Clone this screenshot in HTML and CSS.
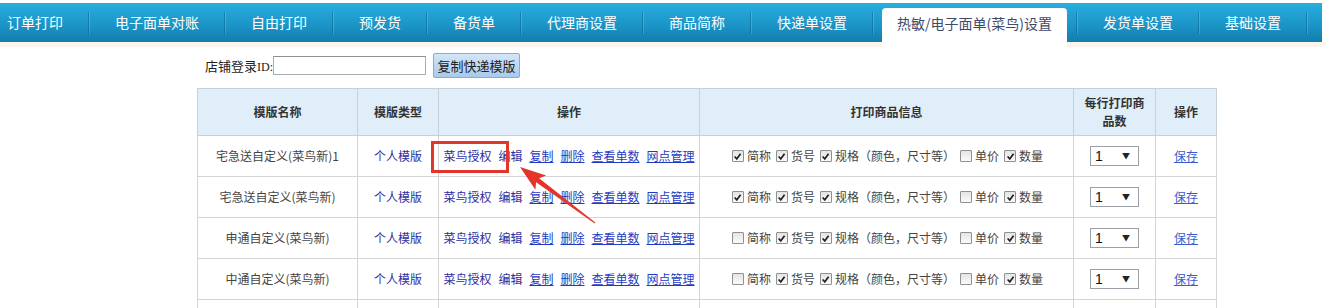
FILE: index.html
```html
<!DOCTYPE html>
<html lang="zh-CN">

<head>
    <meta charset="UTF-8">
    <title>热敏/电子面单(菜鸟)设置</title>
    <link rel="stylesheet" href="styles.css">
</head>

<body>
    <div class="nav">
        <ul class="tabs">
            <li><a href="#">订单打印</a></li>
            <li><a href="#">电子面单对账</a></li>
            <li><a href="#">自由打印</a></li>
            <li><a href="#">预发货</a></li>
            <li><a href="#">备货单</a></li>
            <li><a href="#">代理商设置</a></li>
            <li><a href="#">商品简称</a></li>
            <li><a href="#">快递单设置</a></li>
            <li class="active"><a href="#">热敏/电子面单(菜鸟)设置</a></li>
            <li><a href="#">发货单设置</a></li>
            <li><a href="#">基础设置</a></li>
        </ul>
    </div>

    <div class="main">
        <div class="toolbar">
            <label for="shopId">店铺登录<span class="id">ID:</span></label>
            <input type="text" id="shopId">
            <button type="button" class="copy-btn">复制快递模版</button>
        </div>

        <table class="tpl-table">
            <colgroup>
                <col style="width:160px">
                <col style="width:81px">
                <col style="width:261px">
                <col style="width:374px">
                <col style="width:82px">
                <col style="width:61px">
            </colgroup>
            <thead>
                <tr>
                    <th>模版名称</th>
                    <th>模版类型</th>
                    <th>操作</th>
                    <th>打印商品信息</th>
                    <th>每行打印商品数</th>
                    <th>操作</th>
                </tr>
            </thead>
            <tbody>
                <tr>
                    <td>宅急送自定义(菜鸟新)1</td>
                    <td><a href="#" class="type">个人模版</a></td>
                    <td>
                        <div class="ops">
                            <a href="#">菜鸟授权</a><a href="#">编辑</a><a href="#" class="u">复制</a><a href="#" class="u">删除</a><a href="#" class="u">查看单数</a><a href="#" class="u">网点管理</a>
                        </div>
                    </td>
                    <td>
                        <div class="chk">
                            <label><input type="checkbox" checked>简称</label>
                            <label><input type="checkbox" checked>货号</label>
                            <label><input type="checkbox" checked>规格（颜色，尺寸等）</label>
                            <label><input type="checkbox">单价</label>
                            <label><input type="checkbox" checked>数量</label>
                        </div>
                    </td>
                    <td><span class="sel"><select><option>1</option><option>2</option></select></span></td>
                    <td><a href="#" class="save">保存</a></td>
                </tr>
                <tr>
                    <td>宅急送自定义(菜鸟新)</td>
                    <td><a href="#" class="type">个人模版</a></td>
                    <td>
                        <div class="ops">
                            <a href="#">菜鸟授权</a><a href="#">编辑</a><a href="#" class="u">复制</a><a href="#" class="u">删除</a><a href="#" class="u">查看单数</a><a href="#" class="u">网点管理</a>
                        </div>
                    </td>
                    <td>
                        <div class="chk">
                            <label><input type="checkbox" checked>简称</label>
                            <label><input type="checkbox" checked>货号</label>
                            <label><input type="checkbox" checked>规格（颜色，尺寸等）</label>
                            <label><input type="checkbox">单价</label>
                            <label><input type="checkbox" checked>数量</label>
                        </div>
                    </td>
                    <td><span class="sel"><select><option>1</option><option>2</option></select></span></td>
                    <td><a href="#" class="save">保存</a></td>
                </tr>
                <tr>
                    <td>申通自定义(菜鸟新)</td>
                    <td><a href="#" class="type">个人模版</a></td>
                    <td>
                        <div class="ops">
                            <a href="#">菜鸟授权</a><a href="#">编辑</a><a href="#" class="u">复制</a><a href="#" class="u">删除</a><a href="#" class="u">查看单数</a><a href="#" class="u">网点管理</a>
                        </div>
                    </td>
                    <td>
                        <div class="chk">
                            <label><input type="checkbox">简称</label>
                            <label><input type="checkbox" checked>货号</label>
                            <label><input type="checkbox" checked>规格（颜色，尺寸等）</label>
                            <label><input type="checkbox">单价</label>
                            <label><input type="checkbox" checked>数量</label>
                        </div>
                    </td>
                    <td><span class="sel"><select><option>1</option><option>2</option></select></span></td>
                    <td><a href="#" class="save">保存</a></td>
                </tr>
                <tr>
                    <td>中通自定义(菜鸟新)</td>
                    <td><a href="#" class="type">个人模版</a></td>
                    <td>
                        <div class="ops">
                            <a href="#">菜鸟授权</a><a href="#">编辑</a><a href="#" class="u">复制</a><a href="#" class="u">删除</a><a href="#" class="u">查看单数</a><a href="#" class="u">网点管理</a>
                        </div>
                    </td>
                    <td>
                        <div class="chk">
                            <label><input type="checkbox">简称</label>
                            <label><input type="checkbox" checked>货号</label>
                            <label><input type="checkbox" checked>规格（颜色，尺寸等）</label>
                            <label><input type="checkbox">单价</label>
                            <label><input type="checkbox" checked>数量</label>
                        </div>
                    </td>
                    <td><span class="sel"><select><option>1</option><option>2</option></select></span></td>
                    <td><a href="#" class="save">保存</a></td>
                </tr>
                <tr class="more">
                    <td></td>
                    <td></td>
                    <td></td>
                    <td></td>
                    <td></td>
                    <td></td>
                </tr>
            </tbody>
        </table>

        <!-- screenshot annotation: box around 菜鸟授权 + arrow -->
        <svg class="mark" width="420" height="150" viewBox="0 0 420 150">
            <rect x="235.5" y="54.5" width="75" height="29" fill="none" stroke="#e5352b" stroke-width="3"/>
            <polygon fill="#e5352b" points="323,79 349.2,87.4 342.1,90.2 398.3,134.6 397.7,135.4 339.1,94.2 338.4,101.8"/>
        </svg>
    </div>
</body>

</html>
```

FILE: styles.css
```css
body {
    margin: 0;
    padding-top: 3px;
    font-family: "Noto Sans CJK SC", "Liberation Sans", sans-serif;
    font-size: 12px;
    color: #444;
    background: #fff;
}

a {
    text-decoration: none;
}

/* top nav bar */
.nav {
    height: 44px;
    background: linear-gradient(#28aede, #1a93c5 60%, #127dad) 0 0 / 100% 39px no-repeat, #fcf3ea;
}

.tabs {
    display: flex;
    list-style: none;
    margin: 0;
    padding: 0;
    height: 39px;
}

.tabs li {
    display: flex;
    align-items: center;
}

.tabs li::after {
    content: "";
    width: 1px;
    height: 22px;
    background: rgba(0, 70, 110, 0.35);
    box-shadow: 1px 0 0 rgba(255, 255, 255, 0.18);
}

.tabs a {
    color: #fff;
    font-size: 14px;
    line-height: 39px;
    padding: 0 25px 0 26px;
    white-space: nowrap;
}

.tabs li:first-child a {
    padding-left: 7px;
}

.tabs li.active a {
    align-self: flex-start;
    background: #fff;
    color: #3d4b6b;
    margin: 5px 9px 0;
    height: 39px;
    line-height: 30px;
    padding: 0 15px;
    border-radius: 4px 4px 0 0;
}

/* content */
.main {
    position: relative;
    width: 1019px;
    margin-left: 197px;
    padding-top: 6px;
}

.toolbar {
    display: flex;
    align-items: center;
    height: 25px;
    padding-left: 8px;
    margin-bottom: 10px;
}

.toolbar label {
    font-size: 13px;
    color: #222;
}

.toolbar .id {
    font-family: "Liberation Serif", serif;
    font-size: 12px;
}

.toolbar input {
    box-sizing: border-box;
    width: 153px;
    height: 19px;
    margin: 0;
    padding: 0 3px;
    border: 1px solid #a9adb2;
    border-top-color: #8c9096;
}

.copy-btn {
    box-sizing: border-box;
    width: 87px;
    height: 25px;
    margin-left: 7px;
    padding: 0;
    font-family: inherit;
    font-size: 13px;
    color: #222;
    border: 1px solid #88abd4;
    border-radius: 2px;
    background: linear-gradient(#d3e6f8, #a8caed);
}

.tpl-table {
    width: 1019px;
    table-layout: fixed;
    border-collapse: collapse;
}

.tpl-table th {
    padding: 5px 8px;
    line-height: 18px;
    font-weight: bold;
    color: #333;
    background: #e0eefa;
    border: 1px solid #c8d0d8;
}

.tpl-table td {
    height: 20px;
    padding: 10px 4px;
    line-height: 20px;
    text-align: center;
    vertical-align: middle;
    border: 1px solid #d5d5d5;
    white-space: nowrap;
}

.type {
    color: #2e2ea0;
}

.ops {
    display: flex;
    justify-content: center;
    gap: 7px;
    height: 20px;
}

.ops a {
    color: #2e2ea0;
}

.ops a.u {
    color: #1d3cc2;
    text-decoration: underline;
}

.save {
    color: #3a5ccc;
    text-decoration: underline;
}

.chk {
    display: flex;
    justify-content: center;
    gap: 3px;
    height: 20px;
}

.chk label {
    display: inline-flex;
    align-items: center;
}

.chk input {
    appearance: none;
    box-sizing: border-box;
    width: 12px;
    height: 12px;
    margin: 0 3px 0 2px;
    border: 1px solid #909090;
    border-radius: 1px;
    background: linear-gradient(#e4e4e4, #fbfbfb);
}

.chk input:checked {
    background: url("data:image/svg+xml,%3Csvg xmlns='http://www.w3.org/2000/svg' viewBox='0 0 10 10'%3E%3Cpath d='M1.8 5 L4.2 7.6 L8.4 2' fill='none' stroke='%23222' stroke-width='1.9'/%3E%3C/svg%3E") center / 9px no-repeat, linear-gradient(#e4e4e4, #fbfbfb);
}

.sel {
    position: relative;
    display: inline-block;
    height: 20px;
    vertical-align: top;
}

.sel select {
    appearance: none;
    display: block;
    box-sizing: border-box;
    width: 49px;
    height: 20px;
    margin: 0;
    padding: 0 0 0 4px;
    font-family: "Liberation Sans", sans-serif;
    font-size: 14px;
    color: #111;
    background: #fff;
    border: 1px solid #9aa0a6;
    border-radius: 0;
}

.sel::after {
    content: "\25BC";
    position: absolute;
    right: 9px;
    top: 5px;
    font-size: 8px;
    line-height: 10px;
    color: #222;
    pointer-events: none;
}

.mark {
    position: absolute;
    left: 0;
    top: 41px;
    pointer-events: none;
}
```
